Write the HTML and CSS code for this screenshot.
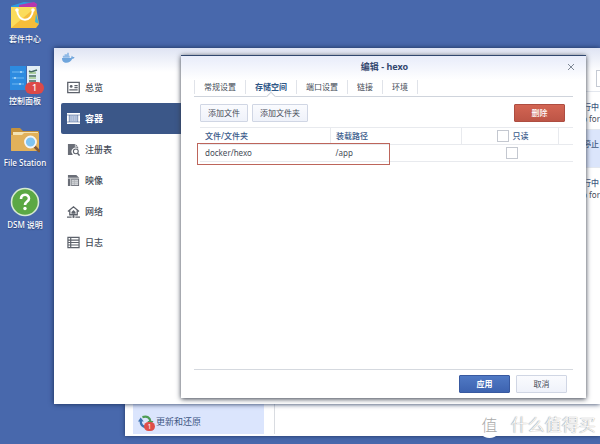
FILE: index.html
```html
<!DOCTYPE html>
<html lang="zh-CN">
<head>
<meta charset="utf-8">
<title>Docker</title>
<link rel="stylesheet" href="styles.css">
</head>
<body>
<main class="desktop">
  <nav class="shortcuts">
    <a href="#" class="shortcut">
      <svg viewBox="0 0 30 30"><path d="M1 5 14 1l12 1v6H1z" fill="#2f9ade"/><path d="M9 4 24 1l3 2-1 7H9z" fill="#b637ae"/><path d="m26 4 2 18-3 2z" fill="#31a9dc"/><path d="M1 6h25l3 17-3 4H1z" fill="#f5bd3a"/><path d="M1 6h25L1 27z" fill="#fbdc5c"/><path d="m26 13 3 10-4-2z" fill="#3db5d8"/><path d="M7 9c1 13 15 13 16 0" fill="none" stroke="#fff" stroke-width="2"/><circle cx="7" cy="9" r="1.800" fill="#fff"/><circle cx="23" cy="9" r="1.800" fill="#fff"/></svg>
      <span>套件中心</span>
    </a>
    <a href="#" class="shortcut">
      <svg viewBox="0 0 30 30"><path d="M0 3h16v24H0z" fill="#2d8be0"/><path d="M17 3h13v24H17z" fill="#e1edf5"/><path d="M2 9h12M2 15h12M2 21h12" stroke="#71b8f1" stroke-width="1"/><path d="M11 8v2M5 14v2M10 20v2" stroke="#b5dcfa" stroke-width="1.500"/><path d="m19 8 2 1 6-2M19 13h7M19 18h7" fill="none" stroke="#456a62" stroke-width="1.600"/><path d="M19 10h7M19 15h7" stroke="#7cb552"/></svg>
      <span class="badge">1</span>
      <span>控制面板</span>
    </a>
    <a href="#" class="shortcut">
      <svg viewBox="0 0 30 30"><path d="M1 4q0-1 1-1h8l3 3h15q1 0 1 1v19H1z" fill="#c4913c"/><path d="M3 7h25v4H3z" fill="#f4e3b4"/><path d="M1 10h11l2-2h15v17q0 1-1 1H2q-1 0-1-1z" fill="#e2b15a"/><path d="m25 22 4 4" stroke="#855b35" stroke-width="2.600" stroke-linecap="round"/><circle cx="20.500" cy="17" r="5.500" fill="#7fc4f1" stroke="#f4f6f7" stroke-width="1.800"/></svg>
      <span>File Station</span>
    </a>
    <a href="#" class="shortcut">
      <svg viewBox="0 0 30 30"><circle cx="15" cy="15" r="13.500" fill="#5ba844" stroke="#d6e9d2" stroke-width="1.600"/><path d="M11 12c0-5.500 8-5.500 8-.5 0 3-4 3-4 6.500" fill="none" stroke="#fff" stroke-width="2.600"/><circle cx="15" cy="21.500" r="1.700" fill="#fff"/></svg>
      <span>DSM 说明</span>
    </a>
  </nav>

  <section class="window panel-window">
    <a href="#" class="update">
      <svg viewBox="0 0 18 18"><path d="M3 8q0 6 6 7" fill="none" stroke="#3e72b0" stroke-width="2.600"/><path d="M0 8.500h6.500L3 4z" fill="#3e72b0"/><path d="M5 3.500q8-2 9 5" fill="none" stroke="#4d9c55" stroke-width="2.600"/><path d="m10.500 8 7 0-3.500 4z" fill="#4d9c55"/></svg>
      <span class="dot">1</span>
      <span>更新和还原</span>
    </a>
    <div class="panel-body"></div>
  </section>

  <section class="window docker-window">
    <header class="docker-head">
      <svg viewBox="0 0 16 14"><path d="M1 7h10c1 0 1.500-1 1-2.500 1 .2 1.500.8 1.600 1.500 1-.2 1.600 0 2 .4-.5 1-1.500 1.400-2.600 1.400C11.500 11 9 12.500 6 12.500 3 12.500 1 11 1 7z" fill="#6fa5dc"/><path d="M2 4.500h8v2.200H2zM4 2.500h5v2H4zM7 .8h2v2H7z" fill="#8fb9e6"/></svg>
    </header>
    <div class="docker-body">
      <nav class="menu">
        <a href="#"><svg viewBox="0 0 14 14"><path d="M.8 1.500h12.400v11H.8z" fill="none" stroke="#5d626b" stroke-width="1.400"/><circle cx="4.500" cy="5.800" r="1.500" fill="#5d626b"/><path d="M2.500 9.500h9M8 5h3.500M8 7.200h3.500" stroke="#5d626b" stroke-width="1.300"/></svg>总览</a>
        <a href="#" class="current"><svg viewBox="0 0 14 14"><path d="M0 1h14v2H0zM0 11h14v2H0zM0 3.500h2v7H0zM12 3.500h2v7h-2z" fill="#fff"/><path d="M2.500 3.500h9v7h-9z" fill="#b9c6de"/><path d="M4.500 3.500v7M7 3.500v7M9.500 3.500v7" stroke="#9fb1d0" stroke-width=".7"/></svg>容器</a>
        <a href="#"><svg viewBox="0 0 14 14"><path d="M1 1h8l3 3v2.500A4 4 0 0 0 6 12v1H1z" fill="#6a6e77"/><path d="M9 1v3h3" fill="none" stroke="#fff" stroke-width=".7"/><circle cx="9.500" cy="9" r="2.600" fill="#fff" stroke="#5d626b" stroke-width="1.200"/><path d="m11.300 11 2.200 2.500" stroke="#5d626b" stroke-width="1.500"/></svg>注册表</a>
        <a href="#"><svg viewBox="0 0 14 14"><path d="M1 1h9l3 3v9H1z" fill="#6a6e77"/><path d="M1 4.500h12M4 5v8" stroke="#fff" stroke-width=".8"/><path d="M5 6h7v6H5z" fill="#d3d5d9"/><path d="M5 8h7M5 10h7M8 6v6" stroke="#a5a8ae" stroke-width=".6"/></svg>映像</a>
        <a href="#"><svg viewBox="0 0 14 14"><path d="m1 7 6-5 6 5M3 6v4.500h8V6" fill="none" stroke="#5d626b" stroke-width="1.400"/><path d="m4.800 7.500 2.200-2 2.200 2v2H4.800z" fill="#5d626b"/><path d="M7 10v3M0 13h5M9 13h5" stroke="#5d626b" stroke-width="1.200"/><circle cx="7" cy="12.800" r="1.200" fill="#5d626b"/></svg>网络</a>
        <a href="#"><svg viewBox="0 0 14 14"><path d="M1 1.500h12v11H1zM4 1.500v11M1 4.500h12M1 7h12M1 9.700h12" fill="none" stroke="#5d626b" stroke-width="1.300"/></svg>日志</a>
      </nav>
      <div class="containers">
        <input class="search" type="text" aria-label="搜索">
        <div class="container-row"><b>运行中</b><span>Up for</span></div>
        <div class="container-row selected"><b>停止</b></div>
        <div class="container-row"><b>运行中</b><span>Up for</span></div>
      </div>
    </div>
  </section>

  <section class="window dialog" role="dialog" aria-labelledby="dialog-title">
    <header class="dialog-head">
      <h1 id="dialog-title">编辑 - hexo</h1>
      <button class="close" aria-label="关闭"><svg viewBox="0 0 8 8"><path d="m1 1 6 6M7 1 1 7" stroke="#7e8795" stroke-width="1"/></svg></button>
    </header>
    <nav class="tabs">
      <a href="#">常规设置</a>
      <a href="#" class="active">存储空间</a>
      <a href="#">端口设置</a>
      <a href="#">链接</a>
      <a href="#">环境</a>
    </nav>
    <div class="toolbar">
      <button class="button">添加文件</button>
      <button class="button">添加文件夹</button>
      <button class="button danger">删除</button>
    </div>
    <div class="volumes">
      <table>
        <thead>
          <tr><th class="file">文件/文件夹</th><th class="mount">装载路径</th><th class="readonly"><label><input type="checkbox">只读</label></th><th class="rest"></th></tr>
        </thead>
        <tbody>
          <tr><td>docker/hexo</td><td>/app</td><td class="readonly"><input type="checkbox" aria-label="只读"></td><td></td></tr>
        </tbody>
      </table>
      <div class="highlight"></div>
    </div>
    <footer class="actions">
      <button class="button primary">应用</button>
      <button class="button">取消</button>
    </footer>
  </section>

  <div class="watermark"><span class="mark">值</span><span>什么值得买</span></div>
</main>
</body>
</html>
```
FILE: styles.css
```css
* { box-sizing: border-box; }

body {
  margin: 0;
  font: 8px/12px "Noto Sans", "Noto Sans CJK SC", sans-serif;
  color: #454c58;
}

a { color: inherit; text-decoration: none; }
svg { display: block; flex: none; }
button, input { font: inherit; color: inherit; margin: 0; }

.desktop {
  position: relative;
  height: 100vh;
  overflow: hidden;
  background: #4868ac;
}

.shortcuts {
  display: flex;
  flex-direction: column;
  gap: 18px;
  width: 50px;
  padding-top: 1px;
}

.shortcut {
  position: relative;
  display: flex;
  flex-direction: column;
  align-items: center;
  gap: 2px;
  color: #fff;
  font-weight: 500;
  white-space: nowrap;
  text-shadow: 0 1px 1px #2b4377;
}

.shortcut svg { width: 30px; height: 30px; }

.badge {
  position: absolute;
  top: 19px;
  right: 6px;
  width: 19px;
  border-radius: 6px;
  background: #dd4a48;
  text-align: center;
  font-size: 9px;
  text-shadow: none;
}

.window {
  position: absolute;
  background: #fff;
}

.panel-window {
  left: 125px;
  right: 0;
  top: 380px;
  bottom: 8px;
  display: flex;
  align-items: flex-end;
  padding: 0 0 2px 8px;
  box-shadow: 0 0 4px #20345f;
}

.update {
  position: relative;
  display: flex;
  align-items: center;
  gap: 2px;
  width: 131px;
  height: 30px;
  padding: 6px 0 0 5px;
  background: #dbe5fd;
  color: #3d5683;
  font-size: 9px;
}

.update svg { width: 16px; height: 16px; }

.dot {
  position: absolute;
  left: 11px;
  top: 18px;
  width: 11px;
  border-radius: 5px;
  background: #df4f49;
  color: #fff;
  font-size: 7px;
  line-height: 9px;
  text-align: center;
}

.panel-body {
  flex: 1;
  height: 30px;
  margin-left: 10px;
  border-left: 1px solid #d9dce1;
}

.docker-window {
  left: 54px;
  right: 0;
  top: 48px;
  bottom: 40px;
  background: linear-gradient(#dfe4f3, #fff 24px);
  box-shadow: 0 0 5px #182a52;
}

.docker-head { height: 22px; padding: 4px 7px; }
.docker-head svg { width: 14px; height: 12px; }

.docker-body { display: flex; }

.menu {
  width: 140px;
  padding: 2px 0 0 7px;
  font-size: 9px;
  font-weight: 500;
}

.menu a {
  display: flex;
  align-items: center;
  gap: 5px;
  height: 31px;
  padding-left: 6px;
  border-radius: 2px;
}

.menu svg { width: 13px; height: 13px; }
.menu .current { background: #3b5788; color: #fff; font-weight: 700; }

.containers {
  flex: 1;
  display: flex;
  flex-direction: column;
  align-items: flex-end;
}

.search {
  width: 4px;
  height: 17px;
  margin: 0 0 4px;
  padding: 0;
  border: 1px solid #c5cad3;
  border-right: 0;
  background: #fff;
}

.container-row {
  display: flex;
  flex-direction: column;
  align-items: flex-end;
  justify-content: center;
  width: 100%;
  height: 38px;
  padding-top: 4px;
  border-top: 1px solid #e3e7ee;
}

.container-row b { color: #41597f; font-weight: 500; padding-right: 1px; }
.container-row.selected { background: #dbe5fb; justify-content: flex-start; padding-top: 8px; }

.dialog {
  left: 181px;
  right: 14px;
  top: 55px;
  bottom: 46px;
  display: flex;
  flex-direction: column;
  padding: 0 13px 5px;
  border-top: 1px solid #31476f;
  background: linear-gradient(#e8ecfa, #fff 24px);
  box-shadow: 0 1px 5px #333a48;
}

.dialog-head {
  display: grid;
  grid-template-columns: 8px 1fr 8px;
  align-items: center;
  height: 22px;
  margin-right: -2px;
}

.dialog-head h1 {
  grid-column: 2;
  margin: 0;
  font-size: 9px;
  font-weight: 700;
  color: #34486f;
  text-align: center;
}

.close { padding: 0; border: 0; background: none; }
.close svg { width: 8px; height: 8px; }

.tabs {
  display: flex;
  align-items: center;
  height: 19px;
  border-bottom: 1px solid #cfd4dc;
}

.tabs a {
  position: relative;
  padding: 0 9px;
  border-right: 1px solid #e0e3e9;
  line-height: 14px;
}

.tabs a:first-child { border-left: 1px solid #e0e3e9; }
.tabs .active { color: #2d5686; font-weight: 700; }

.tabs .active::after {
  content: "";
  position: absolute;
  left: 50%;
  bottom: -6px;
  width: 6px;
  height: 6px;
  border: solid #cfd4dc;
  border-width: 1px 0 0 1px;
  background: #fff;
  transform: translateX(-50%) rotate(45deg);
}

.toolbar {
  display: flex;
  gap: 4px;
  padding: 7px 8px 5px 6px;
}

.button {
  min-width: 51px;
  height: 18px;
  padding: 0 7px;
  border: 1px solid #d0d6e4;
  border-radius: 1px;
  background: linear-gradient(#fafbfe, #eff2fa);
  line-height: 14px;
}

.toolbar .button { min-width: 48px; }
.toolbar .danger {
  min-width: 51px;
  margin-left: auto;
  border-color: #ae4d41;
  background: linear-gradient(#d36553, #bd5546);
  color: #fff;
  font-weight: 500;
}

.volumes { position: relative; flex: 1; padding-left: 6px; }

table {
  width: 100%;
  border-collapse: collapse;
  table-layout: fixed;
}

th, td {
  height: 17px;
  padding: 0 5px;
  border-bottom: 1px solid #e8eaee;
  text-align: left;
  font-weight: 400;
}

th {
  border-top: 1px solid #e8eaee;
  border-right: 1px solid #e8eaee;
  color: #38598a;
  font-weight: 500;
}

.file { width: 35%; }
.readonly { width: 26%; text-align: center; }
.rest { width: 4%; border-right: 0; }

label {
  display: flex;
  align-items: center;
  justify-content: center;
  gap: 4px;
  padding-left: 6px;
}

input[type="checkbox"] {
  appearance: none;
  display: block;
  width: 12px;
  height: 12px;
  border: 1px solid #c4c8d0;
  background: #fff;
}

td.readonly { padding-left: 10px; }
td input[type="checkbox"] { margin: auto; }

.highlight {
  position: absolute;
  left: 3px;
  top: 16px;
  width: 51%;
  height: 22px;
  border: 1px solid #bd655b;
}

.actions {
  display: flex;
  justify-content: flex-end;
  gap: 6px;
  padding: 5px 6px 0;
  border-top: 1px solid #d5d9df;
}

.primary {
  border-color: #3859a0;
  background: linear-gradient(#5079c4, #3d63b0);
  color: #fff;
  font-weight: 700;
}

.watermark {
  position: absolute;
  right: 4px;
  bottom: 6px;
  display: flex;
  align-items: center;
  gap: 9px;
  color: #fff;
  font-size: 17px;
  font-weight: 300;
  line-height: 26px;
  text-shadow: 0 0 1px #888, -1px 0 1px #bbb;
}

.mark {
  width: 25px;
  height: 25px;
  border-radius: 50%;
  background: #fff;
  color: #aaa;
  font-size: 16px;
  line-height: 24px;
  text-align: center;
  text-shadow: none;
}
```
